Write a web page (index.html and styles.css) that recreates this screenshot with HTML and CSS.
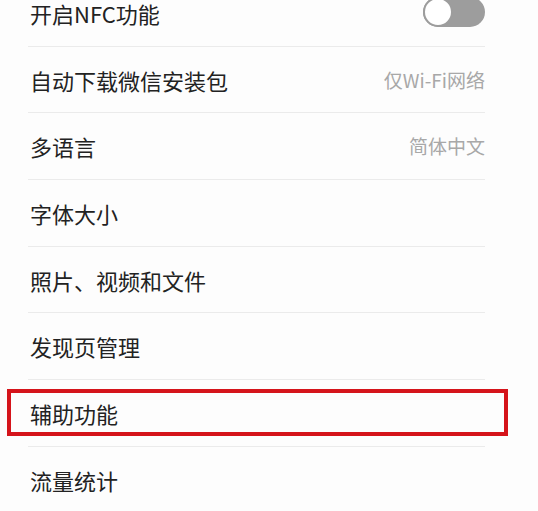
FILE: index.html
```html
<!DOCTYPE html>
<html lang="zh-CN">
<head>
<meta charset="utf-8">
<title>设置</title>
<link rel="stylesheet" href="styles.css">
</head>
<body>
<div class="list">
  <div class="row row-first">
    <div class="row-inner">
      <span class="title">开启NFC功能</span>
      <span class="switch"><span class="knob"></span></span>
    </div>
  </div>
  <div class="row">
    <div class="row-inner">
      <span class="title">自动下载微信安装包</span>
      <span class="value">仅Wi-Fi网络</span>
    </div>
  </div>
  <div class="row">
    <div class="row-inner">
      <span class="title">多语言</span>
      <span class="value">简体中文</span>
    </div>
  </div>
  <div class="row">
    <div class="row-inner">
      <span class="title">字体大小</span>
    </div>
  </div>
  <div class="row">
    <div class="row-inner">
      <span class="title">照片、视频和文件</span>
    </div>
  </div>
  <div class="row">
    <div class="row-inner">
      <span class="title">发现页管理</span>
    </div>
  </div>
  <div class="row">
    <div class="row-inner">
      <span class="title">辅助功能</span>
    </div>
    <div class="highlight"></div>
  </div>
  <div class="row">
    <div class="row-inner">
      <span class="title">流量统计</span>
    </div>
  </div>
</div>
</body>
</html>
```

FILE: styles.css
```css
html, body {
  margin: 0;
  padding: 0;
}
body {
  width: 538px;
  height: 511px;
  overflow: hidden;
  background: #fdfdfd;
  font-family: "Noto Sans CJK SC", "Noto Sans", sans-serif;
}
.list {
  display: flex;
  flex-direction: column;
}
.row {
  position: relative;
  height: 66.67px;
  display: flex;
  flex-shrink: 0;
}
.row-first {
  height: 46.67px;
}
.row-inner {
  flex: 1;
  margin: 0 53px 0 28px;
  padding: 1px 0 0 2px;
  border-bottom: 1px solid #ebebeb;
  display: flex;
  align-items: center;
  justify-content: space-between;
}
.row-first .row-inner {
  padding: 0 0 19px 2px;
}
.title {
  font-size: 22px;
  color: #222222;
  line-height: 1.2;
}
.value {
  font-size: 19px;
  color: #a8a8a8;
  line-height: 1.2;
}
.switch {
  position: relative;
  width: 62px;
  height: 30px;
  border-radius: 15px;
  background: #9d9d9d;
  margin-top: -2px;
}
.knob {
  position: absolute;
  left: 0;
  top: 0;
  width: 30px;
  height: 30px;
  box-sizing: border-box;
  border-radius: 50%;
  background: #ffffff;
  border: 2px solid #9d9d9d;
}
.highlight {
  position: absolute;
  left: 7px;
  top: 9px;
  width: 501px;
  height: 47px;
  box-sizing: border-box;
  border: 4px solid #d5141b;
}
```
